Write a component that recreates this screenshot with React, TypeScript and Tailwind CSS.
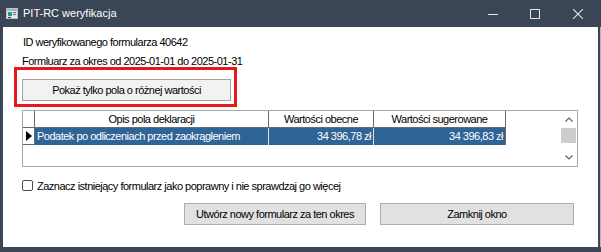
export default function App() {
  return (
    <div className="w-[601px] h-[252px] bg-[#3a4555] flex flex-col overflow-hidden font-['Liberation_Sans',Arial,sans-serif]">
      {/* Title bar */}
      <div className="h-[27px] shrink-0 flex items-center">
        <svg className="ml-[6px]" width="12" height="11" viewBox="0 0 12 11">
          <rect x="0.5" y="0.5" width="11" height="10" fill="#e6e6e6" stroke="#bfbfbf" />
          <rect x="1" y="1" width="10" height="2" fill="#9fb4c8" />
          <rect x="2" y="4" width="4" height="4" fill="#1f9c8c" />
          <rect x="7" y="4" width="3" height="1" fill="#6b6b6b" />
          <rect x="7" y="6" width="3" height="1" fill="#6b6b6b" />
          <rect x="2" y="9" width="3" height="1" fill="#2b3a4a" />
        </svg>
        <span className="ml-[5px] text-[11px] text-white leading-none">PIT-RC weryfikacja</span>
        <div className="ml-auto flex items-center mr-[18px]">
          <svg width="10" height="10" viewBox="0 0 10 10">
            <line x1="0" y1="5.5" x2="10" y2="5.5" stroke="#e6e6e6" strokeWidth="1" />
          </svg>
          <svg className="ml-[32px]" width="10" height="10" viewBox="0 0 10 10">
            <rect x="0.5" y="0.5" width="9" height="9" fill="none" stroke="#e6e6e6" strokeWidth="1" />
          </svg>
          <svg className="ml-[33px]" width="10" height="10" viewBox="0 0 10 10">
            <line x1="0" y1="0" x2="10" y2="10" stroke="#e6e6e6" strokeWidth="1.1" />
            <line x1="10" y1="0" x2="0" y2="10" stroke="#e6e6e6" strokeWidth="1.1" />
          </svg>
        </div>
      </div>

      {/* Body */}
      <div className="flex h-[220px] shrink-0">
        <div className="w-[3px]" />
        <div className="w-[595px] h-[220px] bg-white flex flex-col text-[11px] tracking-[-0.5px] text-black">
          <div className="mt-[9px] ml-[20px] h-[12px] leading-[12px]">ID weryfikowanego formularza 40642</div>
          <div className="mt-[7px] ml-[19px] h-[12px] leading-[12px]">Formluarz za okres od 2025-01-01 do 2025-01-31</div>

          <div className="ml-[11px] w-[223px] border-[3px] border-[#e8171d] pt-[9px] pl-[5px] pr-[3px] pb-[3px]">
            <div className="h-[22px] border border-[#a3a3a3] bg-[#f2f2f2] flex items-center justify-center">
              Pokaż tylko pola o różnej wartości
            </div>
          </div>

          {/* Grid */}
          <div className="mt-[3px] ml-[19px] w-[556px] h-[57px] border border-[#a6a6a6] flex">
            <div className="flex-1 flex flex-col">
              <div className="flex h-[17px]">
                <div className="w-[12px] border-r border-b border-[#6b6b6b]" />
                <div className="w-[234px] border-r border-b border-[#6b6b6b] flex items-center justify-center">Opis pola deklaracji</div>
                <div className="w-[105px] border-r border-b border-[#6b6b6b] flex items-center justify-center">Wartości obecne</div>
                <div className="w-[132px] border-r border-b border-[#6b6b6b] flex items-center justify-center">Wartości sugerowane</div>
              </div>
              <div className="flex h-[17px]">
                <div className="w-[12px] border-r border-b border-[#6b6b6b] flex items-center justify-center">
                  <svg width="6" height="10" viewBox="0 0 6 10">
                    <polygon points="0,0 6,5 0,10" fill="#000" />
                  </svg>
                </div>
                <div className="w-[234px] bg-[#2f6497] text-white border-r border-[#d9e2ec] flex items-center pl-[2px]">Podatek po odliczeniach przed zaokrągleniem</div>
                <div className="w-[105px] bg-[#2f6497] text-white border-r border-[#d9e2ec] flex items-center justify-end pr-[2px]">34 396,78 zł</div>
                <div className="w-[132px] bg-[#2f6497] text-white border-r border-[#6b6b6b] flex items-center justify-end pr-[2px]">34 396,83 zł</div>
              </div>
            </div>
            {/* Scrollbar */}
            <div className="w-[17px] flex flex-col bg-white">
              <div className="h-[17px] flex items-center justify-center">
                <svg width="8" height="5" viewBox="0 0 8 5">
                  <polyline points="0.5,4.5 4,1 7.5,4.5" fill="none" stroke="#606060" strokeWidth="1.2" />
                </svg>
              </div>
              <div className="h-[15px] mx-[1px] bg-[#cdcdcd]" />
              <div className="flex-1" />
              <div className="h-[17px] flex items-center justify-center">
                <svg width="8" height="5" viewBox="0 0 8 5">
                  <polyline points="0.5,0.5 4,4 7.5,0.5" fill="none" stroke="#606060" strokeWidth="1.2" />
                </svg>
              </div>
            </div>
          </div>

          {/* Checkbox */}
          <div className="mt-[13px] ml-[19px] flex items-center h-[11px]">
            <div className="w-[11px] h-[11px] rounded-[2px] border border-[#4d4d4d] bg-white" />
            <span className="ml-[4px] leading-[12px]">Zaznacz istniejący formularz jako poprawny i nie sprawdzaj go więcej</span>
          </div>

          {/* Buttons */}
          <div className="mt-[12px] flex justify-end pr-[24px] gap-[14px]">
            <div className="w-[182px] h-[22px] border border-[#adadad] bg-[#e1e1e1] flex items-center justify-center">Utwórz nowy formularz za ten okres</div>
            <div className="w-[194px] h-[22px] border border-[#adadad] bg-[#e1e1e1] flex items-center justify-center">Zamknij okno</div>
          </div>
        </div>
        <div className="w-[2px]" />
        <div className="w-[1px] bg-[#b5b5b5]" />
      </div>
    </div>
  );
}
